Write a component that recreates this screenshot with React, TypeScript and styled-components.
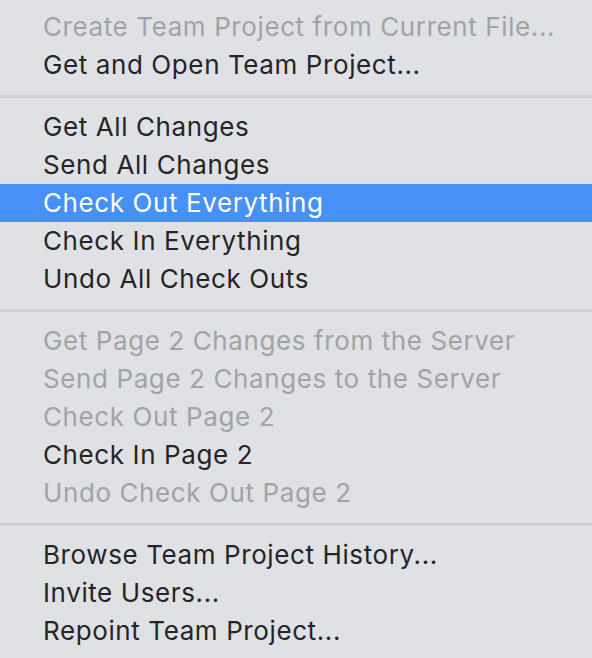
import React from 'react'
import styled, { createGlobalStyle } from 'styled-components'

const GlobalStyle = createGlobalStyle`
  html, body {
    margin: 0;
    padding: 0;
    background: #e0e1e4;
  }
`

const MenuPanel = styled.div`
  width: 592px;
  height: 658px;
  box-sizing: border-box;
  padding: 8px 0;
  background: #e0e1e4;
  border-bottom-left-radius: 12px;
  font-family: Inter, 'Noto Sans', sans-serif;
  overflow: hidden;
`

const MenuItem = styled.div<{ $disabled?: boolean; $active?: boolean }>`
  height: 38px;
  display: flex;
  align-items: center;
  padding-left: 43px;
  padding-bottom: 1px;
  box-sizing: border-box;
  font-size: 26px;
  letter-spacing: 0.6px;
  color: ${({ $disabled, $active }) =>
    $active ? '#ffffff' : $disabled ? '#a2a3a6' : '#252527'};
  background: ${({ $active }) => ($active ? '#4790f6' : 'transparent')};
  white-space: nowrap;
`

const Separator = styled.div`
  height: 24px;
  display: flex;
  align-items: center;
  &::after {
    content: '';
    flex: 1;
    height: 3px;
    background: #cfd0d3;
  }
`

type Item = { label: string; disabled?: boolean; active?: boolean }

const groups: Item[][] = [
  [
    { label: 'Create Team Project from Current File...', disabled: true },
    { label: 'Get and Open Team Project...' },
  ],
  [
    { label: 'Get All Changes' },
    { label: 'Send All Changes' },
    { label: 'Check Out Everything', active: true },
    { label: 'Check In Everything' },
    { label: 'Undo All Check Outs' },
  ],
  [
    { label: 'Get Page 2 Changes from the Server', disabled: true },
    { label: 'Send Page 2 Changes to the Server', disabled: true },
    { label: 'Check Out Page 2', disabled: true },
    { label: 'Check In Page 2' },
    { label: 'Undo Check Out Page 2', disabled: true },
  ],
  [
    { label: 'Browse Team Project History...' },
    { label: 'Invite Users...' },
    { label: 'Repoint Team Project...' },
  ],
]

const App: React.FC = (): JSX.Element => (
  <>
    <GlobalStyle />
    <MenuPanel>
      {groups.map((g, gi) => (
        <React.Fragment key={gi}>
          {gi > 0 && <Separator />}
          {g.map((it, i) => (
            <MenuItem key={i} $disabled={it.disabled} $active={it.active}>
              {it.label}
            </MenuItem>
          ))}
        </React.Fragment>
      ))}
    </MenuPanel>
  </>
)

export default App
